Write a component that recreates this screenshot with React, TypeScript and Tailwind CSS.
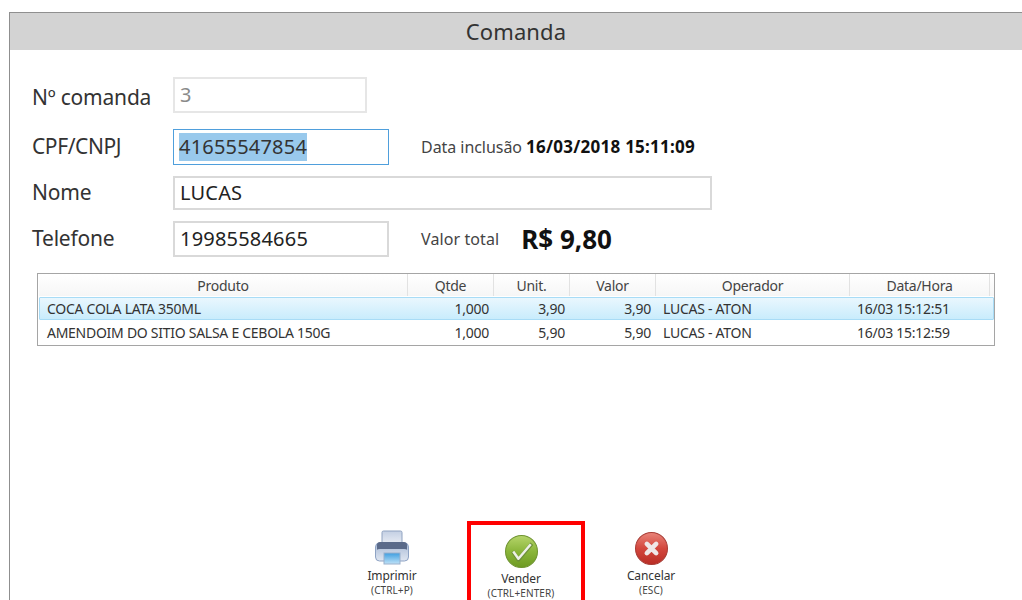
const font = "font-['Noto_Sans','Open_Sans',sans-serif]";

const rows = [
  { produto: "COCA COLA LATA 350ML", qtde: "1,000", unit: "3,90", valor: "3,90", operador: "LUCAS - ATON", data: "16/03 15:12:51" },
  { produto: "AMENDOIM DO SITIO SALSA E CEBOLA 150G", qtde: "1,000", unit: "5,90", valor: "5,90", operador: "LUCAS - ATON", data: "16/03 15:12:59" },
];

const headerColumns = "grid grid-cols-[369px_86px_76px_86px_194px_140px]";
const rowColumns = "grid grid-cols-[369px_86px_76px_86px_194px_1fr]";

function PrinterIcon() {
  return (
    <svg width="36" height="36" viewBox="0 0 36 36">
      <defs>
        <linearGradient id="paper" x1="0" y1="0" x2="0" y2="1">
          <stop offset="0" stopColor="#c3cfe3" />
          <stop offset="1" stopColor="#eef1f7" />
        </linearGradient>
        <linearGradient id="body" x1="0" y1="0" x2="0" y2="1">
          <stop offset="0" stopColor="#a9bbd6" />
          <stop offset="1" stopColor="#dfe6f1" />
        </linearGradient>
        <linearGradient id="tray" x1="0" y1="0" x2="0" y2="1">
          <stop offset="0" stopColor="#3f9ee0" />
          <stop offset="1" stopColor="#bfe2f7" />
        </linearGradient>
      </defs>
      <rect x="8" y="1" width="20" height="15" rx="1.5" fill="url(#paper)" stroke="#8fa2c0" />
      <rect x="1.5" y="13" width="33" height="18" rx="4" fill="url(#body)" stroke="#8ea3c4" />
      <path d="M3 15 Q3 12 6 12 H30 Q33 12 33 15 L33 20 Q33 19 30 19 H6 Q3 19 3 20 Z" fill="#5b6b8a" />
      <rect x="10" y="23" width="16" height="11" fill="url(#tray)" stroke="#9ab0cc" />
    </svg>
  );
}

function CheckIcon() {
  return (
    <svg width="33" height="33" viewBox="0 0 32 32">
      <defs>
        <linearGradient id="green" x1="0" y1="0" x2="0" y2="1">
          <stop offset="0" stopColor="#b6d56b" />
          <stop offset="0.5" stopColor="#8ab53a" />
          <stop offset="1" stopColor="#6d9a22" />
        </linearGradient>
      </defs>
      <circle cx="16" cy="16" r="15.5" fill="url(#green)" stroke="#6f9431" />
      <path d="M7.5 16 L13 24 L26 8.5" fill="none" stroke="#6d8f3a" strokeWidth="3.6" strokeLinejoin="round" />
      <path d="M8 16 L13 23 L25 9" fill="none" stroke="#eef1e8" strokeWidth="2.4" strokeLinejoin="round" />
    </svg>
  );
}

function CrossIcon() {
  return (
    <svg width="33" height="33" viewBox="0 0 32 32">
      <defs>
        <linearGradient id="red" x1="0" y1="0" x2="0" y2="1">
          <stop offset="0" stopColor="#e9847a" />
          <stop offset="0.5" stopColor="#d3473d" />
          <stop offset="1" stopColor="#b92d25" />
        </linearGradient>
      </defs>
      <circle cx="16" cy="16" r="15.5" fill="url(#red)" stroke="#a83c35" />
      <path d="M11.5 11.5 L20.5 20.5 M20.5 11.5 L11.5 20.5" stroke="#efe8e8" strokeWidth="4.5" strokeLinecap="round" />
    </svg>
  );
}

function Action({ icon, label, hint, width }: { icon: React.ReactNode; label: string; hint: string; width: string }) {
  return (
    <div className={`flex flex-col items-center ${width}`}>
      <div className="flex h-[36px] items-center justify-center">{icon}</div>
      <div className="mt-px text-[12px] leading-[17px] tracking-[-0.1px] text-[#333]">{label}</div>
      <div className="text-[10px] leading-[12px] tracking-[0.1px] text-[#444]">{hint}</div>
    </div>
  );
}

export default function App() {
  return (
    <div className={`h-[600px] w-[1022px] overflow-hidden bg-white pl-[9px] pt-[12px] ${font}`}>
      <div className="h-[588px] border-l border-t border-[#8f8f8f] bg-white">
        <div className="flex h-[37px] items-center justify-center bg-[#d3d3d3] text-[22px] tracking-[0.1px] text-[#333]">
          Comanda
        </div>

        <div className="pl-[22px] pr-[27px]">
          <div className="mt-[27px] flex h-[36px] items-center">
            <div className="w-[141px] pt-[6px] text-[21px] tracking-[-0.2px] text-[#333]">Nº comanda</div>
            <div className="flex h-[36px] w-[194px] items-center border-2 border-[#e6e6e6] pl-[5px] text-[20px] text-[#8a8a8a]">3</div>
          </div>

          <div className="mt-[16px] flex h-[36px] items-center">
            <div className="w-[141px] text-[21px] tracking-[-0.4px] text-[#333]">CPF/CNPJ</div>
            <div className="flex h-[36px] w-[216px] items-center border border-[#4f9fdc] pl-[5px] text-[20px] tracking-[0.2px] text-[#333]">
              <span className="bg-[#99c9ec] leading-[28px]">41655547854</span>
            </div>
            <div className="ml-[32px] text-[16px] tracking-[-0.05px] text-[#444]">
              Data inclusão <span className="text-[17px] font-bold tracking-[0.25px] text-[#111]">16/03/2018 15:11:09</span>
            </div>
          </div>

          <div className="mt-[11px] flex h-[34px] items-center">
            <div className="w-[141px] text-[21px] tracking-[-0.2px] text-[#333]">Nome</div>
            <div className="flex h-[34px] w-[539px] items-center border-2 border-[#d9d9d9] pl-[5px] text-[20px] tracking-[0.2px] text-[#222]">LUCAS</div>
          </div>

          <div className="mt-[11px] flex h-[36px] items-center">
            <div className="w-[141px] text-[21px] tracking-[-0.2px] text-[#333]">Telefone</div>
            <div className="flex h-[36px] w-[216px] items-center border-2 border-[#d9d9d9] pl-[5px] text-[20px] tracking-[0.2px] text-[#222]">19985584665</div>
            <div className="ml-[32px] text-[16px] tracking-[0.1px] text-[#444]">Valor total</div>
            <div className="ml-[22px] text-[26px] font-bold text-[#111]">R$ 9,80</div>
          </div>
        </div>

        <div className="ml-[27px] mt-[16px] h-[73px] w-[958px] border border-[#a5a5a5] pl-px text-[14px] tracking-[-0.27px] text-[#333]">
          <div className={`${headerColumns} h-[22px] bg-gradient-to-b from-white to-[#f6f6f6] text-[#444]`}>
            {["Produto", "Qtde", "Unit.", "Valor", "Operador", "Data/Hora"].map((title) => (
              <div key={title} className="flex items-center justify-center border-r border-[#e2e2e2]">
                {title}
              </div>
            ))}
          </div>
          {rows.map((row, i) => (
            <div
              key={row.produto}
              className={`${rowColumns} items-center ${
                i === 0
                  ? "mt-px h-[23px] rounded-[1px] border border-[#a8dcf6] bg-gradient-to-b from-[#e9f7fe] to-[#c9ecfc]"
                  : "h-[25px] px-px"
              }`}
            >
              <div className="pl-[7px]">{row.produto}</div>
              <div className="pr-[6px] text-right">{row.qtde}</div>
              <div className="pr-[6px] text-right">{row.unit}</div>
              <div className="pr-[6px] text-right">{row.valor}</div>
              <div className="pl-[6px]">{row.operador}</div>
              <div className="pl-[6px]">{row.data}</div>
            </div>
          ))}
        </div>

        <div className="ml-[321px] mt-[175px] flex items-start">
          <div className="pt-[9px]">
            <Action icon={<PrinterIcon />} label="Imprimir" hint="(CTRL+P)" width="w-[122px]" />
          </div>
          <div className="ml-[14px] h-[100px] w-[118px] border-4 border-[#ff0000] pr-[10px] pt-[8px]">
            <Action icon={<CheckIcon />} label="Vender" hint="(CTRL+ENTER)" width="w-full" />
          </div>
          <div className="ml-[5px] pt-[9px]">
            <Action icon={<CrossIcon />} label="Cancelar" hint="(ESC)" width="w-[122px]" />
          </div>
        </div>
      </div>
    </div>
  );
}
